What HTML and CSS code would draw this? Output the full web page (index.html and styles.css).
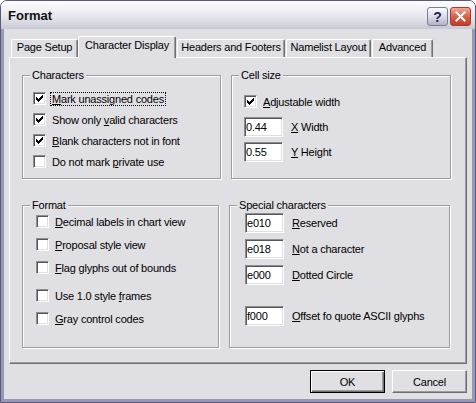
FILE: index.html
```html
<!DOCTYPE html>
<html>
<head>
<meta charset="utf-8">
<title>Format</title>
<link rel="stylesheet" href="styles.css">
</head>
<body>
<div class="window">
  <div class="titlebar">
    <span class="title">Format</span>
    <div class="tbtns">
      <span class="tbtn help">?</span>
      <span class="tbtn close"><svg width="11" height="11" viewBox="0 0 11 11"><path d="M1.5 1.5L9.5 9.5M9.5 1.5L1.5 9.5" stroke="#fff" stroke-width="2" stroke-linecap="square"/></svg></span>
    </div>
  </div>
  <div class="client">
    <div class="tabs">
      <div class="tab t1">Page Setup</div>
      <div class="tab t2 sel">Character Display</div>
      <div class="tab t3">Headers and Footers</div>
      <div class="tab t4">Namelist Layout</div>
      <div class="tab t5">Advanced</div>
    </div>
    <div class="panel">
      <div class="row r1">
        <fieldset class="grp g-chars">
          <legend>Characters</legend>
          <div class="body b-chars">
            <div class="opt"><span class="cb"><svg class="ck" width="11" height="11" viewBox="0 0 11 11"><path d="M8 2h1v1h-1zM7 3h2v1h-2zM2 4h1v1h-1zM6 4h3v1h-3zM2 5h2v1h-2zM5 5h3v1h-3zM2 6h5v1h-5zM3 7h3v1h-3zM4 8h1v1h-1z"/></svg></span><span class="lbl focus"><u>M</u>ark unassigned codes</span></div>
            <div class="opt"><span class="cb"><svg class="ck" width="11" height="11" viewBox="0 0 11 11"><path d="M8 2h1v1h-1zM7 3h2v1h-2zM2 4h1v1h-1zM6 4h3v1h-3zM2 5h2v1h-2zM5 5h3v1h-3zM2 6h5v1h-5zM3 7h3v1h-3zM4 8h1v1h-1z"/></svg></span><span class="lbl">Show only <u>v</u>alid characters</span></div>
            <div class="opt"><span class="cb"><svg class="ck" width="11" height="11" viewBox="0 0 11 11"><path d="M8 2h1v1h-1zM7 3h2v1h-2zM2 4h1v1h-1zM6 4h3v1h-3zM2 5h2v1h-2zM5 5h3v1h-3zM2 6h5v1h-5zM3 7h3v1h-3zM4 8h1v1h-1z"/></svg></span><span class="lbl"><u>B</u>lank characters not in font</span></div>
            <div class="opt"><span class="cb"></span><span class="lbl">Do not mark <u>p</u>rivate use</span></div>
          </div>
        </fieldset>
        <fieldset class="grp g-cell">
          <legend>Cell size</legend>
          <div class="body b-cell">
            <div class="opt"><span class="cb"><svg class="ck" width="11" height="11" viewBox="0 0 11 11"><path d="M8 2h1v1h-1zM7 3h2v1h-2zM2 4h1v1h-1zM6 4h3v1h-3zM2 5h2v1h-2zM5 5h3v1h-3zM2 6h5v1h-5zM3 7h3v1h-3zM4 8h1v1h-1z"/></svg></span><span class="lbl"><u>A</u>djustable width</span></div>
            <div class="field first"><input class="edit" type="text" value="0.44" readonly><span class="flbl"><u>X</u> Width</span></div>
            <div class="field"><input class="edit" type="text" value="0.55" readonly><span class="flbl"><u>Y</u> Height</span></div>
          </div>
        </fieldset>
      </div>
      <div class="row r2">
        <fieldset class="grp g-fmt">
          <legend>Format</legend>
          <div class="body b-fmt">
            <div class="opt tall"><span class="cb"></span><span class="lbl"><u>D</u>ecimal labels in chart view</span></div>
            <div class="opt tall"><span class="cb"></span><span class="lbl"><u>P</u>roposal style view</span></div>
            <div class="opt tall"><span class="cb"></span><span class="lbl"><u>F</u>lag glyphs out of bounds</span></div>
            <div class="opt tall sep"><span class="cb"></span><span class="lbl">Use 1.0 style <u>f</u>rames</span></div>
            <div class="opt tall"><span class="cb"></span><span class="lbl"><u>G</u>ray control codes</span></div>
          </div>
        </fieldset>
        <fieldset class="grp g-spec">
          <legend>Special characters</legend>
          <div class="body b-spec">
            <div class="field"><input class="edit" type="text" value="e010" readonly><span class="flbl"><u>R</u>eserved</span></div>
            <div class="field"><input class="edit" type="text" value="e018" readonly><span class="flbl"><u>N</u>ot a character</span></div>
            <div class="field"><input class="edit" type="text" value="e000" readonly><span class="flbl"><u>D</u>otted Circle</span></div>
            <div class="field far"><input class="edit" type="text" value="f000" readonly><span class="flbl"><u>O</u>ffset fo quote ASCII glyphs</span></div>
          </div>
        </fieldset>
      </div>
    </div>
    <div class="btns">
      <button class="btn def" type="button">OK</button>
      <button class="btn" type="button">Cancel</button>
    </div>
  </div>
</div>
</body>
</html>
```
FILE: styles.css
```css
* { box-sizing: border-box; }
html, body { margin: 0; padding: 0; background: #ffffff; }
body {
  font-family: "Liberation Sans", Arial, sans-serif;
  font-size: 11px;
  letter-spacing: -0.2px;
  color: #000;
}
u { text-decoration: underline; text-underline-offset: 1px; }

.window {
  width: 476px;
  height: 403px;
  border: 1px solid #5a5a78;
  border-radius: 7px 7px 0 0;
  background: #e0dfe3;
  overflow: hidden;
  display: flex;
  flex-direction: column;
}

.titlebar {
  height: 28px;
  flex: none;
  display: flex;
  justify-content: space-between;
  align-items: flex-start;
  padding: 0 4px 0 7px;
  background: linear-gradient(#fdfdff 0%, #f1f1f6 30%, #e3e3eb 62%, #c8c8d4 100%);
}
.title {
  font-weight: bold;
  font-size: 13px;
  letter-spacing: 0;
  line-height: 13px;
  margin-top: 8px;
  color: #111;
}
.tbtns { display: flex; gap: 2px; margin-top: 6px; }
.tbtn {
  width: 21px;
  height: 19px;
  border-radius: 3px;
  display: flex;
  align-items: center;
  justify-content: center;
}
.help {
  background: linear-gradient(#fbfbff, #dcdce8 50%, #b2b2c8);
  border: 1px solid #7c7c9c;
  color: #24245a;
  font-weight: bold;
  font-size: 14px;
  letter-spacing: 0;
  line-height: 14px;
}
.close {
  background: linear-gradient(#f3a796, #dc604a 50%, #c23c28);
  border: 1px solid #9e3e30;
}

.client {
  flex: 1;
  border: 3px solid #9898b4;
  border-top: 0;
  padding: 7px 5px 6px;
  display: flex;
  flex-direction: column;
}

.tabs {
  display: flex;
  align-items: flex-end;
  height: 21px;
  padding-left: 2px;
  position: relative;
  z-index: 1;
}
.tab {
  height: 18px;
  border-style: solid;
  border-width: 1px 1px 0 1px;
  border-color: #fff #6f6f6f transparent #fff;
  border-radius: 2px 2px 0 0;
  box-shadow: inset -1px 0 #9d9da1;
  padding-top: 1px;
  line-height: 13px;
  text-align: center;
  white-space: nowrap;
}
.tab.sel {
  height: 22px;
  margin-bottom: -1px;
  padding-top: 2px;
  background: #e0dfe3;
}
.t1 { width: 67px; }
.t2 { width: 98px; margin-right: 1px; }
.t3 { width: 108px; margin-right: 1px; }
.t4 { width: 85px; margin-right: 1px; }
.t5 { width: 61px; }

.panel {
  height: 307px;
  border: 1px solid;
  border-color: #fff #6f6f6f #6f6f6f #fff;
  box-shadow: inset -1px -1px #9d9da1;
  padding: 11px 0 0 12px;
}
.row { display: flex; gap: 10px; }
.r2 { margin-top: 20px; }

.grp {
  margin: 0;
  min-width: 0;
  padding: 0 7px;
  border: 1px solid #9d9da1;
  box-shadow: inset 1px 1px #fff, 1px 1px #fff;
}
.grp legend {
  padding: 0 2px;
  line-height: 13px;
  background: #e0dfe3;
}
.r1 .grp { height: 110px; }
.r2 .grp { height: 149px; }
.g-chars { width: 199px; }
.g-cell { width: 220px; }
.g-fmt { width: 197px; }
.g-spec { width: 221px; }

.b-chars { padding: 6px 0 0 3px; }
.b-cell { padding: 9px 0 0 5px; }
.b-fmt { padding: 0 0 0 6px; margin-top: -2px; }
.b-spec { padding: 1px 0 0 8px; }

.opt {
  height: 21px;
  display: flex;
  align-items: center;
}
.opt.tall { height: 23px; }
.opt.sep { margin-top: 5px; }

.cb {
  width: 13px;
  height: 13px;
  flex: none;
  border: 1px solid;
  border-color: #8e8e92 #fff #fff #8e8e92;
  box-shadow: inset 1px 1px #55555b, inset -1px -1px #e0dfe3;
  background: #fff;
}
.ck { display: block; fill: #000; }

.lbl {
  margin-left: 4px;
  padding: 0 1px;
  border: 1px solid transparent;
  line-height: 12px;
  white-space: nowrap;
}
.lbl.focus { border: 1px dotted #000; }

.field {
  height: 20px;
  display: flex;
  align-items: center;
  margin-top: 6px;
}
.b-spec .field:first-child { margin-top: 0; }
.field.first { margin-top: 5px; }
.b-cell .field + .field { margin-top: 5px; }
.field.far { margin-top: 21px; }

.edit {
  width: 39px;
  height: 20px;
  margin: 0;
  border: 1px solid;
  border-color: #8e8e92 #fff #fff #8e8e92;
  box-shadow: inset 1px 1px #55555b, inset -1px -1px #e0dfe3;
  padding: 0 0 0 1px;
  background: #fff;
  color: #000;
  font: inherit;
  letter-spacing: inherit;
  outline: none;
}
.flbl { margin-left: 8px; white-space: nowrap; }

.btns {
  display: flex;
  justify-content: flex-end;
  gap: 7px;
  margin-top: 6px;
}
.btn {
  width: 75px;
  height: 23px;
  margin: 0;
  padding: 0;
  border: 1px solid;
  border-color: #fff #6f6f6f #6f6f6f #fff;
  box-shadow: inset -1px -1px #9d9da1;
  background: #e0dfe3;
  color: #000;
  font: inherit;
  letter-spacing: inherit;
  text-align: center;
}
.btn.def {
  border-color: #000;
  box-shadow: inset 1px 1px #fff, inset -1px -1px #6f6f6f, inset -2px -2px #9d9da1;
}
```
